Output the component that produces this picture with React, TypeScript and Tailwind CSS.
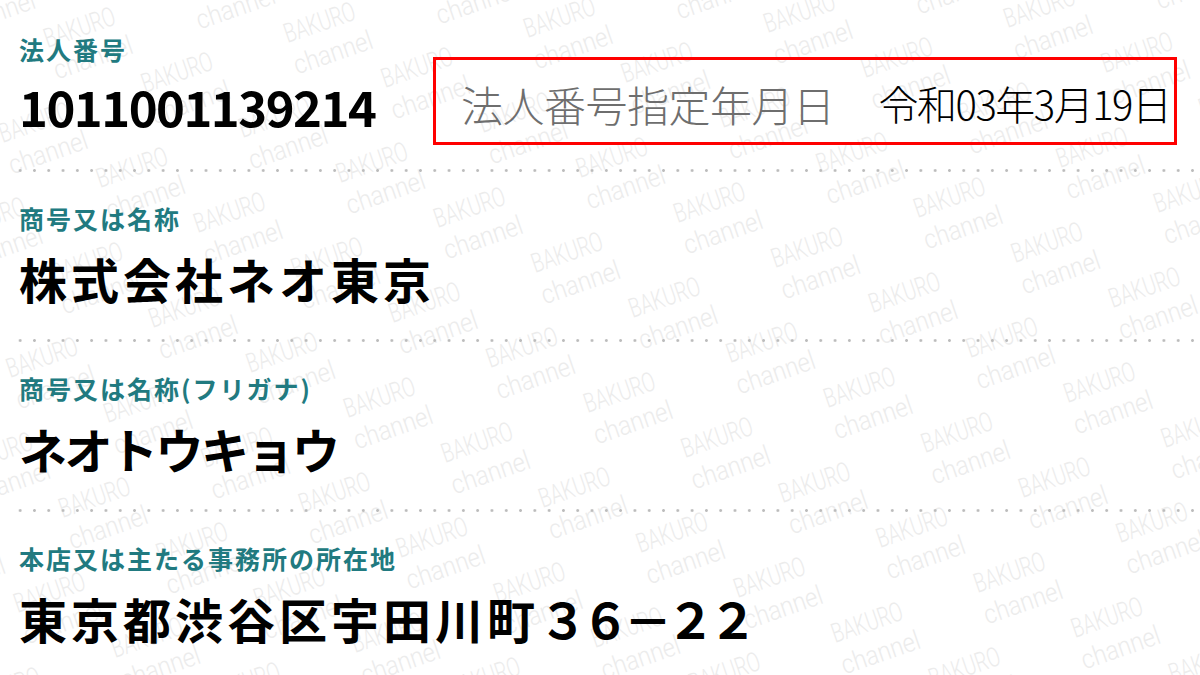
import React from "react";

// watermark lattice (measured off the reference)
const ORIGIN = { x: 535, y: 273 };
const STEP_A = { x: 97.5, y: 45 };
const STEP_B = { x: -45, y: 95 };

const Watermark = () => {
  const marks: { x: number; y: number }[] = [];
  for (let i = -14; i <= 14; i++) {
    for (let j = -10; j <= 10; j++) {
      const x = ORIGIN.x + i * STEP_A.x + j * STEP_B.x;
      const y = ORIGIN.y + i * STEP_A.y + j * STEP_B.y;
      if (x < -130 || x > 1260 || y < -40 || y > 760) continue;
      marks.push({ x, y });
    }
  }

  return (
    <svg className="absolute inset-0" width={1200} height={675} aria-hidden>
      {marks.map((m, idx) => (
        <g
          key={idx}
          transform={`translate(${m.x} ${m.y}) rotate(-19)`}
          fill="#ececec"
          fontFamily="Roboto, 'Liberation Sans', sans-serif"
          fontWeight={300}
          fontSize={27}
        >
          <text x={0} y={0} textLength={74} lengthAdjust="spacingAndGlyphs">
            BAKURO
          </text>
          <text x={-1} y={33} textLength={82} lengthAdjust="spacingAndGlyphs">
            channel
          </text>
        </g>
      ))}
    </svg>
  );
};

const Dots = () => (
  <div className="ml-[13px] h-[3px] bg-[radial-gradient(circle,#bcbcbc_1.1px,transparent_1.7px)] bg-size-[14.3px_3px] bg-repeat-x" />
);

const Label = ({ children }: { children: React.ReactNode }) => (
  <div className="h-[30px] text-[25px] leading-[30px] font-bold tracking-[2px] text-[#217a80]">
    {children}
  </div>
);

const Field = ({ label, children }: { label: string; children: React.ReactNode }) => (
  <>
    <Dots />
    <div className="h-[167px] pl-[19px] pt-[31px]">
      <Label>{label}</Label>
      <div className="mt-[15px] h-[60px] text-[48px] leading-[60px] font-bold whitespace-nowrap text-black">
        {children}
      </div>
    </div>
  </>
);

export default function App() {
  return (
    <div className="relative h-[675px] w-[1200px] overflow-hidden bg-white font-['Noto_Sans_CJK_JP',sans-serif]">
      <Watermark />
      <div className="relative">
        <div className="flex h-[169px]">
          <div className="w-[433px] pl-[19px] pt-[34px]">
            <Label>法人番号</Label>
            <div className="mt-[12px] h-[60px] text-[49px] leading-[60px] font-bold tracking-[-1.5px] text-black">
              1011001139214
            </div>
          </div>
          <div className="mt-[57px] flex h-[88px] w-[744px] items-center border-[3px] border-[#ff0000] pl-[25px] pt-[4px] whitespace-nowrap">
            <span className="text-[42px] font-light tracking-[-0.5px] text-[#6e6e6e]">
              法人番号指定年月日
            </span>
            <span className="ml-[44px] text-[40px] font-light tracking-[-1.5px] text-black">
              令和03年3月19日
            </span>
          </div>
        </div>

        <Field label="商号又は名称">
          <span className="tracking-[4px]">株式会社ネオ東京</span>
        </Field>

        <Field label="商号又は名称(フリガナ)">
          <span className="tracking-[-2.5px]">ネオトウキョウ</span>
        </Field>

        <Field label="本店又は主たる事務所の所在地">
          <span className="tracking-[4px]">東京都渋谷区宇田川町</span>
          <span className="tracking-[-5.5px]">３６－２２</span>
        </Field>
      </div>
    </div>
  );
}
